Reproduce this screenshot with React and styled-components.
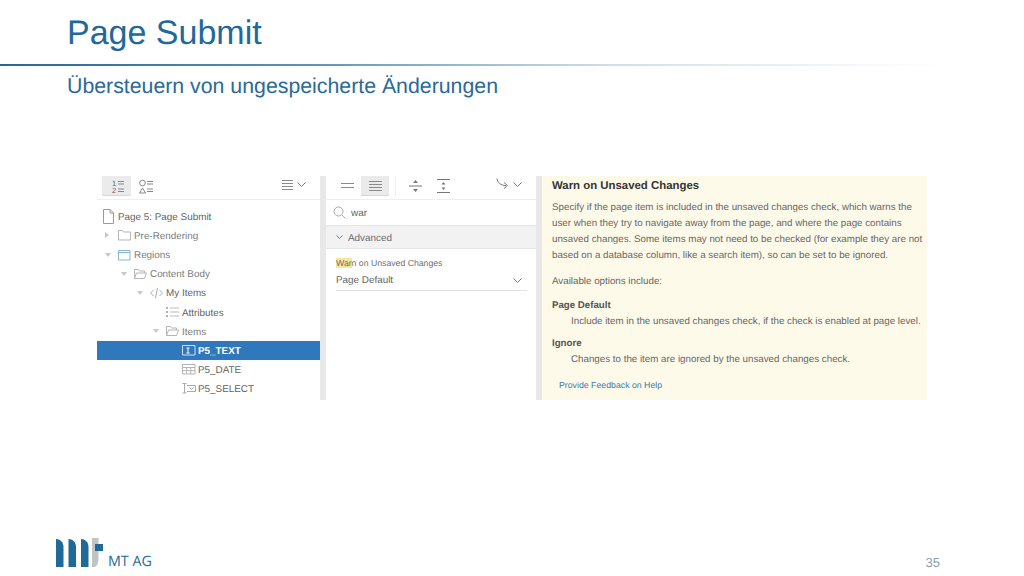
import React from 'react';
import styled, { createGlobalStyle } from 'styled-components';

const GlobalStyle = createGlobalStyle`
  html, body {
    margin: 0;
    padding: 0;
    background: #fff;
  }
`;

const TREE = [
  { id: 0, depth: 0, label: 'Page 5: Page Submit', icon: 'page', dark: true },
  { id: 1, depth: 1, label: 'Pre-Rendering', icon: 'folder', arrow: 'right' },
  { id: 2, depth: 1, label: 'Regions', icon: 'region', arrow: 'down' },
  { id: 3, depth: 2, label: 'Content Body', icon: 'open', arrow: 'down' },
  { id: 4, depth: 3, label: 'My Items', icon: 'code', arrow: 'down', dark: true },
  { id: 5, depth: 4, label: 'Attributes', icon: 'list', dark: true },
  { id: 6, depth: 4, label: 'Items', icon: 'open', arrow: 'down' },
  { id: 7, depth: 5, label: 'P5_TEXT', icon: 'text', selected: true },
  { id: 8, depth: 5, label: 'P5_DATE', icon: 'date', dark: true },
  { id: 9, depth: 5, label: 'P5_SELECT', icon: 'select', dark: true },
];

const Svg = ({ w = 16, h = 16, children, ...rest }) => (
  <svg width={w} height={h} viewBox={`0 0 ${w} ${h}`} fill="none" stroke="#9a9a9a" strokeWidth="1" {...rest}>
    {children}
  </svg>
);

const TreeIcon = ({ type }) => {
  if (type === 'page')
    return (
      <Svg w={13} h={15}>
        <path d="M1.5 .5h6.5l3.500 3.500v10.500h-10zM8 .5v3.500h3.500" />
      </Svg>
    );
  if (type === 'folder')
    return (
      <Svg w={13} h={12}>
        <path d="M.5 1.500h4l1 1.500h7v8h-12z" stroke="#b5b5b5" />
      </Svg>
    );
  if (type === 'region')
    return (
      <Svg w={13} h={12}>
        <path d="M.5 1.500h11.500v9.500h-11.500zM.5 3.500h11.500" stroke="#8ab6da" />
      </Svg>
    );
  if (type === 'open')
    return (
      <Svg w={13} h={12}>
        <path d="M.5 10.500v-9h4l1 1.500h5v2M.5 10.500l2-5.500h10l-2 5.500z" stroke="#b5b5b5" />
      </Svg>
    );
  if (type === 'code')
    return (
      <Svg w={13} h={12}>
        <path d="M3.500 3l-3 3 3 3" stroke="#8ab6da" />
        <path d="M9.500 3l3 3-3 3" stroke="#8ab6da" />
        <path d="M7.500 1l-2 10" stroke="#aaa" />
      </Svg>
    );
  if (type === 'list')
    return (
      <Svg w={13} h={12}>
        <path d="M0 2h2M0 6h2M0 10h2" stroke="#999" strokeWidth="1.500" />
        <path d="M4 2h9M4 6h9M4 10h9" stroke="#bbb" />
      </Svg>
    );
  if (type === 'text')
    return (
      <Svg w={14} h={11}>
        <path d="M.5 .5h12.500v9.500h-12.500z" stroke="#cfe0f0" />
        <path d="M4.500 3h3M4.500 8h3M6 3v5" stroke="#fff" />
      </Svg>
    );
  if (type === 'date')
    return (
      <Svg w={14} h={11}>
        <path d="M.5 .5h12.500v9.500h-12.500zM.5 3.500h12.500M.5 6.700h12.500M4.700 3.500v6.500M8.800 3.500v6.500" stroke="#b5b5b5" />
      </Svg>
    );
  return (
    <Svg w={14} h={11}>
      <path d="M.5 .5h4M2.500 .5v9.500M.5 10h4M5 2.500h8.500v6h-8.500" stroke="#aaa" />
      <path d="M7.500 4.500l2 2 2-2" stroke="#aaa" />
    </Svg>
  );
};

const Chevron = ({ w = 9, h = 5 }) => (
  <Svg w={w} h={h}>
    <path d={`M.5 .5l${(w - 1) / 2} ${h - 1} ${(w - 1) / 2} -${h - 1}`} stroke="#777" />
  </Svg>
);

const Lines = ({ rows, w = 13, step = 3 }) => (
  <Svg w={w} h={rows * step}>
    {Array.from({ length: rows }).map((_, i) => (
      <path key={i} d={`M0 ${i * step + 1}.5h${w}`} stroke="#8a8a8a" />
    ))}
  </Svg>
);

export default function App() {
  return (
    <Slide>
      <GlobalStyle />
      <Header>
        <Title>Page Submit</Title>
        <Rule />
        <Subtitle>Übersteuern von ungespeicherte Änderungen</Subtitle>
      </Header>

      <Shot>
        <TreePanel>
          <PanelBar>
            <ToggleLeft>
              <ToggleButton $active>
                <Svg w={14} h={15}>
                  <text x="2" y="6.500" fontSize="7.500" fill="#666" stroke="none" fontFamily="Liberation Sans">1</text>
                  <text x="2" y="14" fontSize="7.500" fill="#666" stroke="none" fontFamily="Liberation Sans">2</text>
                  <path d="M8 2.500h6M8 5h6M8 10h6M8 12.500h6" stroke="#888" />
                </Svg>
              </ToggleButton>
              <ToggleButton>
                <Svg w={14} h={15}>
                  <circle cx="3.500" cy="4" r="2.800" stroke="#888" />
                  <path d="M3.500 9l3 5h-6z" stroke="#888" />
                  <path d="M8 2.500h6M8 5h6M8 10h6M8 12.500h6" stroke="#888" />
                </Svg>
              </ToggleButton>
            </ToggleLeft>
            <MenuButton>
              <Lines rows={4} w={11} step={3} />
              <Chevron />
            </MenuButton>
          </PanelBar>
          <Tree>
            {TREE.map((n) => (
              <TreeRow key={n.id} $selected={n.selected} $depth={n.depth}>
                {n.depth > 0 && <Arrow $dir={n.arrow} />}
                <IconSlot $page={n.icon === 'page'}>
                  <TreeIcon type={n.icon} />
                </IconSlot>
                <TreeLabel $dark={n.dark} $selected={n.selected}>
                  {n.label}
                </TreeLabel>
              </TreeRow>
            ))}
          </Tree>
        </TreePanel>

        <Divider />

        <PropsPanel>
          <PropsBar>
            <SmallButton>
              <Lines rows={2} w={13} step={4} />
            </SmallButton>
            <SmallButton $active>
              <Lines rows={4} w={13} step={3} />
            </SmallButton>
            <BarSep />
            <SmallButton>
              <Svg w={13} h={14}>
                <path d="M0 7h13" stroke="#777" />
                <path d="M6.500 1l2.500 3h-5zM6.500 13l2.500-3h-5z" fill="#777" stroke="none" />
              </Svg>
            </SmallButton>
            <SmallButton>
              <Svg w={13} h={14}>
                <path d="M0 .5h13M0 13.500h13" stroke="#777" />
                <path d="M6.500 3l2 2.500h-4zM6.500 11l2-2.500h-4z" fill="#777" stroke="none" />
              </Svg>
            </SmallButton>
            <GoButton>
              <Svg w={14} h={12}>
                <path d="M1 .5c.5 4 3.500 7 9 7M8 4.500l3.500 3-3.500 3" stroke="#777" />
              </Svg>
              <Chevron />
            </GoButton>
          </PropsBar>
          <SearchRow>
            <Svg w={13} h={13}>
              <circle cx="5.500" cy="5.500" r="4.500" stroke="#aaa" />
              <path d="M9 9l3.500 3.500" stroke="#aaa" />
            </Svg>
            <SearchText>war</SearchText>
          </SearchRow>
          <GroupHead>
            <Chevron w={7} h={4} />
            <GroupName>Advanced</GroupName>
          </GroupHead>
          <Field>
            <FieldLabel>
              <Mark>War</Mark>n on Unsaved Changes
            </FieldLabel>
            <FieldValue>
              <span>Page Default</span>
              <Chevron />
            </FieldValue>
          </Field>
        </PropsPanel>

        <Divider />

        <HelpPanel>
          <HelpTitle>Warn on Unsaved Changes</HelpTitle>
          <HelpText>
            Specify if the page item is included in the unsaved changes check, which warns the
            <br />
            user when they try to navigate away from the page, and where the page contains
            <br />
            unsaved changes. Some items may not need to be checked (for example they are not
            <br />
            based on a database column, like a search item), so can be set to be ignored.
          </HelpText>
          <HelpText>Available options include:</HelpText>
          <OptionName>Page Default</OptionName>
          <OptionText>Include item in the unsaved changes check, if the check is enabled at page level.</OptionText>
          <OptionName>Ignore</OptionName>
          <OptionText>Changes to the item are ignored by the unsaved changes check.</OptionText>
          <Feedback>Provide Feedback on Help</Feedback>
        </HelpPanel>
      </Shot>

      <Footer>
        <Logo>
          <svg width="47" height="30" viewBox="0 0 47 30">
            <path d="M0 1c4 0 7.500 3 7.500 8v20H0z" fill="#1f6a96" />
            <path d="M12.500 1c4 0 7.500 3 7.500 8v20h-7.500z" fill="#1f6a96" />
            <path d="M25 1c4 0 7.500 3 7.500 8v20H25z" fill="#1f6a96" />
            <path d="M36 0h6.500v21c0 4-1.500 7-4 8H36z" fill="#c2c4c4" />
            <path d="M39 6h8v7h-8z" fill="#1f6a96" />
          </svg>
          <LogoText>MT AG</LogoText>
        </Logo>
        <PageNo>35</PageNo>
      </Footer>
    </Slide>
  );
}

const Slide = styled.div`
  width: 1024px;
  height: 576px;
  display: flex;
  flex-direction: column;
  overflow: hidden;
  background: #fff;
  font-family: 'Liberation Sans', Arial, sans-serif;
  text-rendering: geometricPrecision;
`;

const Header = styled.header`
  display: flex;
  flex-direction: column;
`;

const Title = styled.h1`
  margin: 12px 0 0 67px;
  font-size: 34px;
  line-height: 42px;
  font-weight: 400;
  color: #23689b;
`;

const Rule = styled.div`
  height: 2px;
  margin-top: 10px;
  background: linear-gradient(90deg, #23689b 0%, #5b93b8 30%, #cfe0ea 60%, #f6f8fa 85%, #fff 92%);
`;

const Subtitle = styled.h2`
  margin: 7px 0 0 67px;
  font-size: 21.300px;
  line-height: 26px;
  font-weight: 400;
  color: #2a6a99;
`;

const Shot = styled.section`
  display: flex;
  width: 830px;
  height: 224px;
  margin: 77px 0 0 97px;
  background: #fff;
  font-size: 9.900px;
  color: #6b6b6b;
`;

const TreePanel = styled.div`
  width: 223px;
  flex: none;
  display: flex;
  flex-direction: column;
`;

const PanelBar = styled.div`
  height: 23px;
  flex: none;
  padding-left: 5px;
  padding-right: 14px;
  display: flex;
  align-items: flex-start;
  justify-content: space-between;
  border-bottom: 1px solid #efefef;
`;

const ToggleLeft = styled.div`
  display: flex;
  gap: 0;
`;

const ToggleButton = styled.div`
  width: 29px;
  height: 20px;
  display: flex;
  align-items: center;
  justify-content: center;
  border-radius: 0 0 2px 2px;
  background: ${(p) => (p.$active ? '#ebebeb' : 'transparent')};
  box-shadow: ${(p) => (p.$active ? 'inset 0 -1px 0 #d6d6d6' : 'none')};
`;

const MenuButton = styled.div`
  display: flex;
  align-items: center;
  gap: 4px;
  height: 15px;
  padding-top: 1px;
`;

const Tree = styled.div`
  display: flex;
  flex-direction: column;
  padding-top: 6.600px;
`;

const TreeRow = styled.div`
  height: 19.200px;
  display: flex;
  align-items: center;
  padding-left: ${(p) => (p.$depth === 0 ? 5 : p.$depth * 16 - 8)}px;
  background: ${(p) => (p.$selected ? '#2f78bb' : 'transparent')};
`;

const Arrow = styled.span`
  flex: none;
  width: 11px;
  height: 0;
  position: relative;

  &::before {
    content: '';
    display: ${(p) => (p.$dir ? 'block' : 'none')};
    position: absolute;
    top: -3px;
    left: 0;
    border-style: solid;
    border-color: transparent;
    ${(p) =>
      p.$dir === 'right'
        ? 'border-width: 3px 0 3px 4px; border-left-color: #c8c8c8;'
        : 'top: -2px; border-width: 4px 3px 0 3px; border-top-color: #c8c8c8;'}
  }
`;

const IconSlot = styled.span`
  flex: none;
  width: 16px;
  margin-left: ${(p) => (p.$page ? 0 : 2)}px;
  display: flex;
  align-items: center;
`;

const TreeLabel = styled.span`
  white-space: nowrap;
  padding-top: 2px;
  color: ${(p) => (p.$selected ? '#fff' : p.$dark ? '#636363' : '#7c7c7c')};
  font-weight: ${(p) => (p.$selected ? 700 : 400)};
`;

const Divider = styled.div`
  width: 6px;
  flex: none;
  background: #e8e8e8;
`;

const PropsPanel = styled.div`
  width: 210px;
  flex: none;
  display: flex;
  flex-direction: column;
`;

const PropsBar = styled.div`
  height: 23px;
  flex: none;
  display: flex;
  align-items: flex-start;
  padding-left: 7px;
  padding-right: 14px;
  border-bottom: 1px solid #efefef;
`;

const SmallButton = styled.div`
  width: 28px;
  height: 20px;
  display: flex;
  align-items: center;
  justify-content: center;
  background: ${(p) => (p.$active ? '#ebebeb' : 'transparent')};
  box-shadow: ${(p) => (p.$active ? 'inset 0 -1px 0 #d6d6d6' : 'none')};
`;

const BarSep = styled.span`
  width: 1px;
  height: 20px;
  margin: 0 5px 0 6px;
  background: #f0f0f0;
`;

const GoButton = styled.div`
  margin-left: auto;
  display: flex;
  align-items: center;
  gap: 3px;
  height: 14px;
  padding-top: 1px;
`;

const SearchRow = styled.div`
  height: 26px;
  flex: none;
  display: flex;
  align-items: center;
  gap: 5px;
  padding-left: 7px;
  border-bottom: 1px solid #e6e6e6;
  box-sizing: border-box;
`;

const SearchText = styled.span`
  font-size: 10px;
  padding-top: 2px;
  color: #666;
`;

const GroupHead = styled.div`
  height: 23px;
  flex: none;
  box-sizing: border-box;
  display: flex;
  align-items: center;
  gap: 5px;
  padding-left: 10px;
  background: #f2f2f2;
  border-bottom: 1px solid #e6e6e6;
  color: #6a6a6a;
`;

const GroupName = styled.span`
  padding-top: 2px;
`;

const Field = styled.div`
  margin: 9px 9px 0 10px;
  display: flex;
  flex-direction: column;
`;

const FieldLabel = styled.div`
  font-size: 8.700px;
  line-height: 11px;
  color: #707070;
`;

const Mark = styled.span`
  background: #f8e59a;
`;

const FieldValue = styled.div`
  height: 20px;
  margin-top: 1px;
  display: flex;
  align-items: center;
  justify-content: space-between;
  padding-right: 5px;
  border-bottom: 1px solid #e2e2e2;
  color: #666;
`;

const HelpPanel = styled.div`
  flex: 1;
  min-width: 0;
  box-sizing: border-box;
  padding: 1px 0 0 10px;
  background: #fefae9;
  color: #666;
  font-size: 9.770px;
  line-height: 16px;
`;

const HelpTitle = styled.div`
  font-size: 11.400px;
  line-height: 18px;
  font-weight: 700;
  color: #333;
  margin-bottom: 5px;
`;

const HelpText = styled.p`
  margin: 0 0 10px;
  white-space: nowrap;

  & + & {
    margin-bottom: 8px;
  }
`;

const OptionName = styled.div`
  color: #555;
  font-weight: 700;
  font-size: 9.700px;
`;

const OptionText = styled.div`
  padding-left: 19px;
  white-space: nowrap;
  margin-bottom: 6px;
`;

const Feedback = styled.div`
  margin: 9px 0 0 7px;
  font-size: 8.750px;
  color: #3f79ad;
`;

const Footer = styled.footer`
  flex: 1;
  display: flex;
  align-items: flex-end;
  justify-content: space-between;
  padding: 0 84px 8px 56px;
`;

const Logo = styled.div`
  display: flex;
  align-items: flex-end;
  gap: 5px;
`;

const LogoText = styled.span`
  font-size: 14.300px;
  line-height: 15px;
  color: #1f6a96;
  font-family: 'Open Sans', sans-serif;
  margin-bottom: -1px;
`;

const PageNo = styled.span`
  font-size: 13px;
  line-height: 15px;
  color: #8ca0b0;
  margin-bottom: -2px;
`;
